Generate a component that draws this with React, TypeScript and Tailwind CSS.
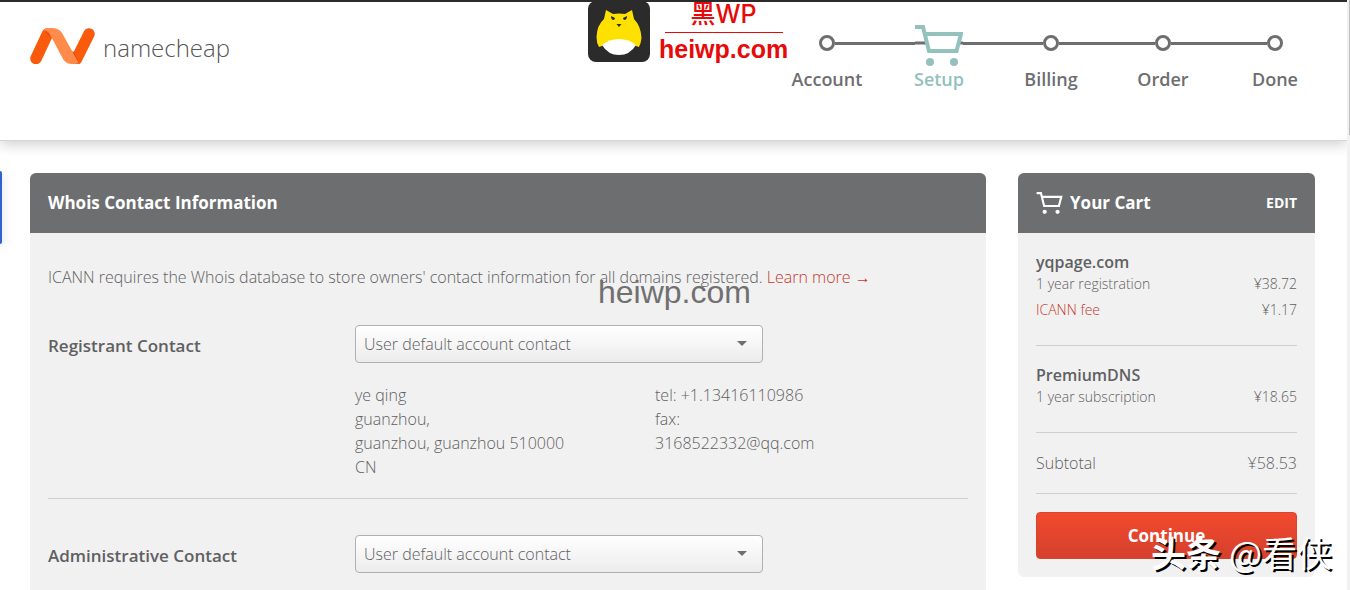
import type { ReactNode } from 'react'

const steps = ['Account', 'Setup', 'Billing', 'Order', 'Done']

const contacts = [
  {
    id: 'registrant',
    label: 'Registrant Contact',
    address: ['ye qing', 'guanzhou,', 'guanzhou, guanzhou 510000', 'CN'],
    details: ['tel: +1.13416110986', 'fax:', '3168522332@qq.com'],
  },
  {
    id: 'administrative',
    label: 'Administrative Contact',
    address: [],
    details: [],
  },
]

function Logo() {
  return (
    <a href="#" className="flex items-center gap-2">
      <svg viewBox="0 0 65 36" className="h-9 w-[65px]">
        <path d="M6 30.500L17.500 6" stroke="#f95a0c" strokeWidth="11.500" strokeLinecap="round" />
        <path d="M59 6L46.500 31" stroke="#f95a0c" strokeWidth="11.500" strokeLinecap="round" />
        <path d="M15 3Q20 7 22.500 13L19 6Z" fill="#c43a10" />
        <path d="M43 23L49 35Q45 30 42 24Z" fill="#c43a10" />
        <path d="M14 2Q16 0 21 0Q29 0 32 5L48.500 34.500Q47 36 42 36Q36 36 33 31L20 6.500Q17.500 2.500 14 2Z" fill="#ff8b4a" />
      </svg>
      <span className="pt-1 font-['Open_Sans'] text-2xl leading-9 font-light text-[#555]">namecheap</span>
    </a>
  )
}

function CartShape() {
  return (
    <>
      <path d="M0 8H8L14 32H41.500L46 15H10" fill="none" stroke="currentColor" strokeWidth="4" />
      <circle cx="15" cy="43" r="4" fill="currentColor" />
      <circle cx="39" cy="43" r="4" fill="currentColor" />
    </>
  )
}

function Progress() {
  return (
    <ol className="flex">
      {steps.map((step, i) => (
        <li key={step} className="w-28 text-center">
          <div className="flex h-12 items-center">
            <span className={`h-[3px] flex-1 ${i > 0 ? 'bg-[#6d6e70]' : ''}`} />
            {step === 'Setup' ? (
              <svg viewBox="0 0 48 48" className="size-12 text-[#92c1be]">
                <path d="M0 24H11M44 24H48" stroke="#6d6e70" strokeWidth="3" />
                <CartShape />
              </svg>
            ) : (
              <span className="size-4 rounded-full border-3 border-[#6d6e70]" />
            )}
            <span className={`h-[3px] flex-1 ${i < steps.length - 1 ? 'bg-[#6d6e70]' : ''}`} />
          </div>
          <span className={`block text-lg leading-6 font-semibold ${step === 'Setup' ? 'text-[#92c1be]' : 'text-[#6d6e70]'}`}>
            {step}
          </span>
        </li>
      ))}
    </ol>
  )
}

function HeiwpBadge() {
  return (
    <div className="absolute top-px left-[588px] flex gap-[9px]">
      <svg viewBox="0 0 62 61" className="h-[61px] w-[62px]">
        <rect width="62" height="61" rx="8" fill="#2b2b2b" />
        <path d="M18 9L25 13Q31 12 37 13L44 9L46 18Q53 25 53.500 37Q53 42 51 46Q48 46 46 43H16Q14 46 11 46Q8.500 42 8.500 36Q9 24 16 18Z" fill="#ffe100" />
        <path d="M14 44Q21 38 31 38Q41 38 48 44Q42 54 31 54Q20 54 14 44Z" fill="#fff" />
        <path d="M23 15L27 17Q27 19 25 19Q23 18.500 23 15ZM39 15L35 17Q35 19 37 19Q39 18.500 39 15ZM28.500 23H33.500L31 26Z" fill="#2b2b2b" />
      </svg>
      <div className="flex flex-col items-center text-[#e60a0a]">
        <span className="font-['Inter','Noto_Sans_CJK_SC',sans-serif] text-[25px] leading-[26px] font-medium">黑WP</span>
        <span className="mt-[5px] h-px w-[118px] bg-[#e60a0a]" />
        <span className="font-['Liberation_Sans'] text-[25px] leading-8 font-bold">heiwp.com</span>
      </div>
    </div>
  )
}

function ContactSection({ contact }: { contact: (typeof contacts)[number] }) {
  return (
    <section className="flex border-b border-[#cfcfcf] pt-9 pb-[18px]">
      <label htmlFor={contact.id} className="w-[307px] shrink-0 text-[17px] leading-[42px] font-semibold">
        {contact.label}
      </label>
      <div className="flex-1">
        <div className="relative w-[408px]">
          <select
            id={contact.id}
            className="h-[38px] w-full appearance-none rounded border border-[#b0b0b0] bg-linear-to-b from-white to-[#ececec] px-2 font-light"
          >
            <option>User default account contact</option>
          </select>
          <span className="pointer-events-none absolute top-4 right-4 border-x-5 border-t-5 border-x-transparent border-t-[#6d6e70]" />
        </div>
        <div className="mt-5 flex min-h-24 pb-px leading-6">
          <div className="w-[300px]">
            {contact.address.map((line) => <p key={line}>{line}</p>)}
          </div>
          <div>
            {contact.details.map((line) => <p key={line}>{line}</p>)}
          </div>
        </div>
      </div>
    </section>
  )
}

function CartItem({ title, children }: { title: string; children: ReactNode }) {
  return (
    <div className="border-b border-[#cfcfcf] pt-[18px] pb-[25px] text-sm leading-5">
      <h3 className="pb-px text-base leading-[22px] font-semibold">{title}</h3>
      <div className="flex flex-col gap-[6px]">{children}</div>
    </div>
  )
}

export default function App() {
  return (
    <div className="relative flex h-screen overflow-hidden bg-white font-['Open_Sans',sans-serif] text-base font-light text-[#5f6062]">
      <div className="min-w-0 flex-1">
        <header className="flex h-[141px] items-start justify-between border-t-2 border-b border-t-[#2b2b2b] border-b-[#d5d5d5] pr-4 pl-[30px] shadow-[0_4px_12px_rgba(0,0,0,0.18)]">
          <div className="pt-6">
            <Logo />
          </div>
          <div className="pt-[17px]">
            <Progress />
          </div>
        </header>

        <main className="flex items-start gap-8 px-[30px] pt-8 pr-8">
          <div className="min-w-0 flex-1 overflow-hidden rounded-md bg-[#f1f1f1]">
            <h1 className="bg-[#6d6e70] px-[18px] text-[17px] leading-[60px] font-bold text-white">Whois Contact Information</h1>
            <div className="px-[18px] pt-8">
              <p className="leading-6">
                ICANN requires the Whois database to store owners' contact information for all domains registered.{' '}
                <a href="#" className="text-[#c5392c]">Learn more →</a>
              </p>
              {contacts.map((contact) => <ContactSection key={contact.id} contact={contact} />)}
            </div>
          </div>

          <aside className="w-[297px] shrink-0 overflow-hidden rounded-md bg-[#f1f1f1]">
            <div className="flex h-[60px] items-center bg-[#6d6e70] px-[18px] font-bold text-white">
              <svg viewBox="0 6 48 41" className="h-[22px] w-[27px]">
                <CartShape />
              </svg>
              <h2 className="ml-[7px] text-[17px]">Your Cart</h2>
              <a href="#" className="ml-auto text-sm">EDIT</a>
            </div>
            <div className="px-[18px] pb-[18px]">
              <CartItem title="yqpage.com">
                <p className="flex justify-between"><span>1 year registration</span><span>¥38.72</span></p>
                <p className="flex justify-between"><a href="#" className="text-[#c5392c]">ICANN fee</a><span>¥1.17</span></p>
              </CartItem>
              <CartItem title="PremiumDNS">
                <p className="flex justify-between"><span>1 year subscription</span><span>¥18.65</span></p>
              </CartItem>
              <p className="flex justify-between border-b border-[#cfcfcf] py-[18px] leading-6">
                <span>Subtotal</span>
                <span>¥58.53</span>
              </p>
              <button className="mt-[18px] h-[47px] w-full rounded border border-[#d8452f] bg-linear-to-b from-[#f24a2e] to-[#d5402c] text-[17px] font-bold text-white">
                Continue
              </button>
            </div>
          </aside>
        </main>
      </div>

      {/* scrollbar */}
      <div className="flex w-[3px] justify-end bg-[#f1f1f1]">
        <span className="h-[135px] w-px bg-[#bdbdbd]" />
      </div>

      {/* side tab */}
      <span className="absolute top-[171px] left-0 h-[73px] w-[2px] rounded-r bg-[#2f5fd0] shadow-[0_2px_10px_rgba(47,60,160,0.4)]" />

      <HeiwpBadge />
      <span className="absolute top-[274px] left-[598px] font-['Liberation_Sans'] text-[32px] leading-9 font-normal text-[#707070]">heiwp.com</span>
      <span className="absolute right-[18px] bottom-[18px] font-['Noto_Sans_CJK_SC',sans-serif] text-[35px] leading-10 font-normal whitespace-nowrap text-white [text-shadow:2px_2px_0_#000]">
        <b>头条</b> @看侠
      </span>
    </div>
  )
}
